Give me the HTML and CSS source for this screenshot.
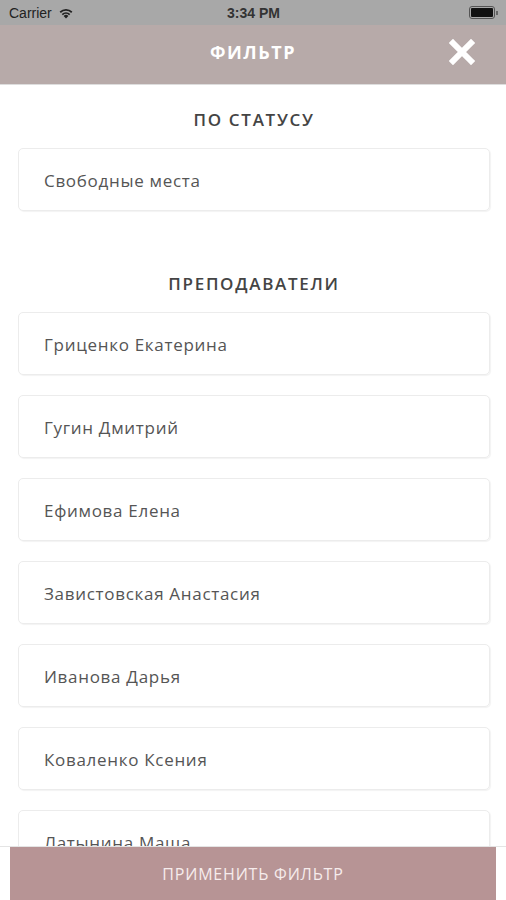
FILE: index.html
```html
<!DOCTYPE html>
<html lang="ru">
<head>
    <meta charset="UTF-8">
    <meta name="viewport" content="width=device-width, initial-scale=1.0">
    <title>Фильтр</title>
    <link rel="stylesheet" href="styles.css">
</head>
<body>
    <div class="status-bar">
        <div class="carrier">
            Carrier
            <svg class="wifi" width="16" height="12" viewBox="0 0 16 12">
                <path d="M8 11.5 L5.6 8.9 A3.4 3.4 0 0 1 10.4 8.9 Z" fill="#222"/>
                <path d="M3.7 6.9 A6.2 6.2 0 0 1 12.3 6.9 L11.1 8.2 A4.5 4.5 0 0 0 4.9 8.2 Z" fill="#222"/>
                <path d="M1.6 4.6 A9.2 9.2 0 0 1 14.4 4.6 L13.2 5.9 A7.5 7.5 0 0 0 2.8 5.9 Z" fill="#222"/>
            </svg>
        </div>
        <div class="clock">3:34 PM</div>
        <div class="battery">
            <div class="battery-body"><div class="battery-level"></div></div>
            <div class="battery-tip"></div>
        </div>
    </div>

    <header class="topbar">
        <h1>ФИЛЬТР</h1>
        <svg class="close" width="26" height="26" viewBox="0 0 26 26">
            <path d="M4 4 L22 22 M22 4 L4 22" stroke="#fff" stroke-width="6" stroke-linecap="square"/>
        </svg>
    </header>

    <main class="content">
        <section class="group">
            <h2>ПО СТАТУСУ</h2>
            <div class="option">Свободные места</div>
        </section>

        <section class="group teachers">
            <h2>ПРЕПОДАВАТЕЛИ</h2>
            <div class="option">Гриценко Екатерина</div>
            <div class="option">Гугин Дмитрий</div>
            <div class="option">Ефимова Елена</div>
            <div class="option">Завистовская Анастасия</div>
            <div class="option">Иванова Дарья</div>
            <div class="option">Коваленко Ксения</div>
            <div class="option">Латынина Маша</div>
        </section>
    </main>

    <footer class="apply-bar">
        <button class="apply">ПРИМЕНИТЬ ФИЛЬТР</button>
    </footer>
</body>
</html>
```

FILE: styles.css
```css
html, body {
    margin: 0;
    padding: 0;
    height: 900px;
    overflow: hidden;
}
body {
    font-family: "Open Sans", "Liberation Sans", sans-serif;
    background-color: #fff;
    position: relative;
}
.status-bar {
    height: 25px;
    background-color: #a8a8a8;
    display: flex;
    align-items: center;
    justify-content: space-between;
    padding: 0 8px 0 9px;
    font-family: "Liberation Sans", Arial, sans-serif;
    font-size: 14px;
    color: #222;
}
.carrier {
    display: flex;
    align-items: center;
    gap: 6px;
    width: 120px;
}
.clock {
    font-weight: bold;
    color: #333;
}
.battery {
    width: 120px;
    display: flex;
    justify-content: flex-end;
    align-items: center;
}
.battery-body {
    width: 22px;
    height: 9px;
    border: 1px solid #555;
    border-radius: 3px;
    padding: 1px;
}
.battery-level {
    width: 100%;
    height: 100%;
    background-color: #111;
    border-radius: 1px;
}
.battery-tip {
    width: 2px;
    height: 4px;
    background-color: #666;
    margin-left: 1px;
}
.topbar {
    height: 60px;
    box-sizing: border-box;
    padding-bottom: 6px;
    background-color: #b7aaa9;
    display: flex;
    align-items: center;
    justify-content: center;
    position: relative;
    border-bottom: 1px solid #ddd;
}
.topbar h1 {
    margin: 0;
    color: #fff;
    font-size: 18px;
    font-weight: bold;
    letter-spacing: 1.5px;
}
.close {
    position: absolute;
    right: 31px;
    top: 14px;
}
.content {
    padding: 0 16px 0 18px;
}
.group h2 {
    margin: 0;
    text-align: center;
    font-size: 17px;
    font-weight: 600;
    color: #444;
    letter-spacing: 1.7px;
    padding: 23px 0 17px;
}
.teachers {
    margin-top: 38px;
}
.option {
    height: 63px;
    box-sizing: border-box;
    border: 1px solid #ececec;
    border-radius: 5px;
    box-shadow: 1px 1px 1px rgba(0,0,0,0.05);
    display: flex;
    align-items: center;
    padding-left: 25px;
    padding-top: 2px;
    font-size: 17px;
    letter-spacing: 0.7px;
    color: #555;
    margin-bottom: 20px;
}
.apply-bar {
    position: absolute;
    left: 0;
    right: 0;
    bottom: 0;
    height: 53px;
    background-color: #fff;
    border-top: 1px solid #e4e4e4;
    padding: 0 10px;
}
.apply {
    width: 100%;
    height: 100%;
    border: none;
    background-color: #b79495;
    color: #f6ecec;
    font-family: "Open Sans", "Liberation Sans", sans-serif;
    font-size: 16px;
    letter-spacing: 0.8px;
}
```
